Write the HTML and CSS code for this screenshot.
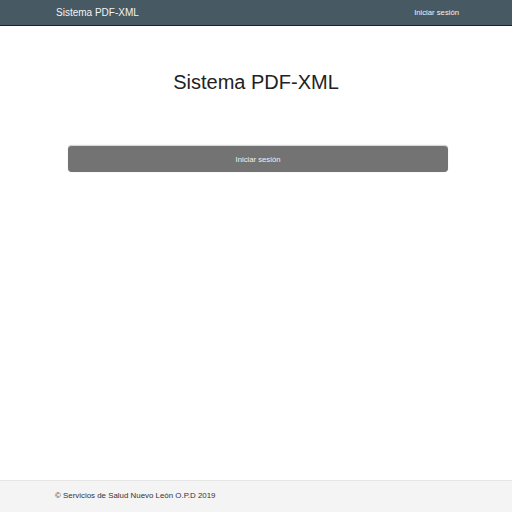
FILE: index.html
```html
<!DOCTYPE html>
<html lang="es">
<head>
<meta charset="utf-8">
<title>Sistema PDF-XML</title>
<link rel="stylesheet" href="styles.css">
</head>
<body>
<div class="page">
  <nav class="navbar">
    <div class="container nav-inner">
      <a class="brand" href="#">Sistema PDF-XML</a>
      <a class="nav-link" href="#">Iniciar sesión</a>
    </div>
  </nav>
  <main class="main">
    <h1 class="title">Sistema PDF-XML</h1>
    <div class="actions">
      <a class="btn" href="#">Iniciar sesión</a>
    </div>
  </main>
  <footer class="footer">
    <div class="container">
      <span class="copy">© Servicios de Salud Nuevo León O.P.D 2019</span>
    </div>
  </footer>
</div>
</body>
</html>
```
FILE: styles.css
```css
* { box-sizing: border-box; }
html, body { margin: 0; padding: 0; height: 100%; }
body {
  font-family: "Liberation Sans", Arial, sans-serif;
  color: #222;
  background: #fff;
}
.page {
  min-height: 512px;
  display: flex;
  flex-direction: column;
}
.container {
  padding: 0 53px 0 55px;
}
.navbar {
  height: 26px;
  background: #475a63;
  border-bottom: 1px solid #1c2326;
}
.nav-inner {
  height: 25px;
  display: flex;
  align-items: center;
  justify-content: space-between;
}
.brand {
  color: #f2f4f5;
  font-size: 10px;
  text-decoration: none;
  margin-left: 1px;
}
.nav-link {
  color: #f2f4f5;
  font-size: 7.7px;
  text-decoration: none;
}
.main {
  flex: 1;
  display: flex;
  flex-direction: column;
  align-items: center;
}
.title {
  margin: 44px 0 0;
  font-size: 20px;
  line-height: 24px;
  font-weight: normal;
  color: #222;
}
.actions {
  width: 100%;
  padding: 0 64px 0 68px;
  margin-top: 51px;
}
.btn {
  display: flex;
  align-items: center;
  justify-content: center;
  height: 27px;
  background: #737373;
  border-radius: 4px;
  border-top: 1px solid #d8d8d8;
  color: #f0f0f0;
  font-size: 7.7px;
  text-decoration: none;
  box-shadow: 0 0 1px rgba(0,0,0,0.3);
}
.footer {
  height: 32px;
  background: #f4f4f4;
  border-top: 1px solid #e5e5e5;
  padding-top: 10px;
}
.copy {
  display: block;
  font-size: 7.9px;
  line-height: 9px;
  color: #333;
}
```
